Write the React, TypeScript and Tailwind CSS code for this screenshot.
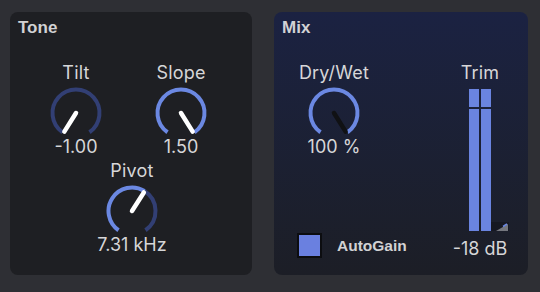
import React from "react";

const BLUE = "#6b88e2";
const DIM = "#323f74";

function pt(cx: number, cy: number, r: number, deg: number) {
  const a = (deg * Math.PI) / 180;
  return [cx + r * Math.sin(a), cy - r * Math.cos(a)];
}

function arc(cx: number, cy: number, r: number, a1: number, a2: number) {
  const [x1, y1] = pt(cx, cy, r, a1);
  const [x2, y2] = pt(cx, cy, r, a2);
  const large = a2 - a1 > 180 ? 1 : 0;
  return `M ${x1} ${y1} A ${r} ${r} 0 ${large} 1 ${x2} ${y2}`;
}

const ARC = 145;
const NEEDLE = 148;

function Knob({ label, value, frac, dark }: { label: string; value: string; frac: number; dark?: boolean }) {
  const cx = 30, cy = 26, r = 23.5;
  const split = -ARC + frac * ARC * 2;
  const needleDeg = -NEEDLE + frac * NEEDLE * 2;
  const [nx, ny] = pt(cx, cy, 22, needleDeg);
  return (
    <div className="flex w-[80px] flex-col items-center">
      <div className="text-[18px] leading-[22px] tracking-[0.2px] text-[#d6d6d8]">{label}</div>
      <svg width="60" height="50" className="mt-[3px]">
        {frac < 1 && <path d={arc(cx, cy, r, Math.max(split, -ARC), ARC)} stroke={DIM} strokeWidth="4" fill="none" />}
        {frac > 0 && <path d={arc(cx, cy, r, -ARC, Math.min(split, ARC))} stroke={BLUE} strokeWidth="4" fill="none" />}
        <line x1={cx} y1={cy} x2={nx} y2={ny} stroke={dark ? "#101114" : "#ffffff"} strokeWidth="4.5" strokeLinecap="round" />
      </svg>
      <div className="whitespace-nowrap text-[18px] leading-[20px] text-[#d6d6d8]">{value}</div>
    </div>
  );
}

function Meter() {
  return (
    <div className="flex w-[60px] flex-col items-center">
      <div className="text-[18px] leading-[22px] tracking-[0.2px] text-[#d6d6d8]">Trim</div>
      <div className="relative mt-[5px] flex h-[142px] gap-[2px]">
        <div className="flex w-[10px] flex-col">
          <div className="h-[18px] bg-[#6a84e0]" />
          <div className="h-[2px]" />
          <div className="flex-1 bg-[#6a84e0]" />
        </div>
        <div className="flex w-[10px] flex-col">
          <div className="h-[18px] bg-[#6a84e0]" />
          <div className="h-[2px]" />
          <div className="flex-1 bg-[#6a84e0]" />
        </div>
        <svg width="18" height="9" className="absolute bottom-0 left-[22px]">
          <rect width="18" height="9" fill="#161822" />
          <polygon points="5,9 17,9 17,2" fill="#75777e" />
          <line x1="12" y1="4.5" x2="16" y2="2" stroke={BLUE} strokeWidth="1.5" />
        </svg>
      </div>
      <div className="mt-[8px] whitespace-nowrap text-[18px] leading-[20px] text-[#d6d6d8]">-18 dB</div>
    </div>
  );
}

export default function App() {
  return (
    <div className="flex h-[292px] w-[540px] gap-[22px] bg-[#2e2f34] pl-[10px] pt-[12px] font-['Inter',sans-serif]">
      <div className="flex h-[263px] w-[242px] flex-col rounded-[8px] bg-[#1e1f23] pl-[8px] pt-[6px]">
        <div className="font-['Liberation_Sans',Arial,sans-serif] text-[17px] font-bold leading-[20px] text-[#d2d2d4]">Tone</div>
        <div className="mt-[24px] flex gap-[25px] pl-[18px]">
          <Knob label="Tilt" value="-1.00" frac={0} />
          <Knob label="Slope" value="1.50" frac={1} />
        </div>
        <div className="mt-[3px] pl-[74px]">
          <Knob label="Pivot" value="7.31 kHz" frac={0.61} />
        </div>
      </div>
      <div className="flex h-[263px] w-[254px] flex-col rounded-[8px] bg-gradient-to-b from-[#1b2242] to-[#1c1e26] pl-[8px] pt-[6px]">
        <div className="font-['Liberation_Sans',Arial,sans-serif] text-[17px] font-bold leading-[20px] text-[#d2d2d4]">Mix</div>
        <div className="mt-[24px] flex">
          <div className="flex w-[168px] flex-col">
            <div className="pl-[12px]">
              <Knob label="Dry/Wet" value="100 %" frac={1} dark />
            </div>
            <div className="mt-[76px] flex items-center pl-[15px]">
              <div className="h-[25px] w-[25px] border-2 border-[#0c0d10] bg-[#6a80e0]" />
              <div className="ml-[15px] font-['Liberation_Sans',Arial,sans-serif] text-[15.5px] font-bold text-[#d2d2d4]">AutoGain</div>
            </div>
          </div>
          <Meter />
        </div>
      </div>
    </div>
  );
}
